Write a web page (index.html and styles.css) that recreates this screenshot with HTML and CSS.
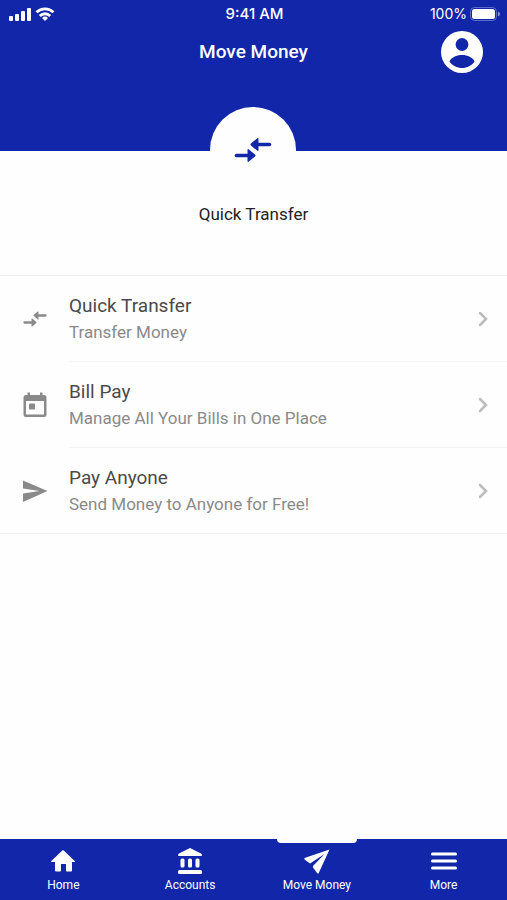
FILE: index.html
```
<!DOCTYPE html>
<html lang="en">
<head>
<meta charset="utf-8">
<meta name="viewport" content="width=device-width, initial-scale=1">
<title>Move Money</title>
<link rel="stylesheet" href="styles.css">
</head>
<body>
<header class="header">
  <div class="status">
    <div class="status-left">
      <svg width="22" height="14" viewBox="0 0 22 14" fill="currentColor" aria-hidden="true"><rect x="0" y="9" width="4" height="5" rx="1"/><rect x="6" y="7" width="4" height="7" rx="1"/><rect x="12" y="4" width="4" height="10" rx="1"/><rect x="18" y="1" width="4" height="13" rx="1"/></svg>
      <svg width="20" height="14" viewBox="0 0 20 14" fill="none" stroke="currentColor" stroke-width="2.8" aria-hidden="true"><path d="M1.500 5.300a12.200 12.200 0 0 1 17 0M4.800 8.900a7.400 7.400 0 0 1 10.400 0"/><path d="M7 11a4.400 4.400 0 0 1 6 0l-3 3z" fill="currentColor" stroke="none"/></svg>
    </div>
    <span class="time">9:41 AM</span>
    <div class="status-right">
      <span>100%</span>
      <svg width="30" height="14" viewBox="0 0 30 14" aria-hidden="true"><rect x=".5" y=".5" width="26" height="13" rx="4" fill="none" stroke="#5f6bc9"/><rect x="2" y="2" width="23" height="10" rx="2.500" fill="currentColor"/><path d="M28 4.500q2 .8 2 2.500t-2 2.500z" fill="#8b94da"/></svg>
    </div>
  </div>
  <div class="titlebar">
    <h1>Move Money</h1>
    <button class="profile" type="button" aria-label="Profile">
      <svg width="42" height="42" viewBox="0 0 42 42" aria-hidden="true"><circle cx="21" cy="21" r="21" fill="#fff"/><circle cx="21" cy="13.500" r="6.400" fill="#1226aa"/><path d="M8.500 30.500C10 26.500 15.500 24 21 24s11 2.500 12.500 6.500C31 34.500 26 37 21 37s-10-2.500-12.500-6.500z" fill="#1226aa"/></svg>
    </button>
  </div>
</header>
<main>
  <section class="hero">
    <button class="hero-button" type="button">
      <span class="hero-circle">
        <svg width="44" height="44" viewBox="0 0 24 24" aria-hidden="true"><use href="#transfer"/></svg>
      </span>
      <span>Quick Transfer</span>
    </button>
  </section>
  <ul class="list">
    <li><a class="row" href="#quick-transfer">
      <svg class="row-icon" viewBox="0 0 24 24" aria-hidden="true"><g id="transfer"><path d="M3 15h7M21 9h-7" fill="none" stroke="currentColor" stroke-width="2" stroke-linecap="round"/><path d="M9 12.200q0-1.200.9-.4l3.200 2.700q.6.500 0 1l-3.200 2.700q-.9.800-.9-.4zM15 6.200q0-1.200-.9-.4l-3.200 2.700q-.6.500 0 1l3.200 2.700q.9.800.9-.4z" fill="currentColor"/></g></svg>
      <span class="row-body"><span class="row-text"><span class="row-title">Quick Transfer</span><span class="row-sub">Transfer Money</span></span>
      <svg class="chevron" viewBox="0 0 10 16" aria-hidden="true"><path d="M2 2l6 6-6 6"/></svg></span>
    </a></li>
    <li><a class="row" href="#bill-pay">
      <svg class="row-icon" viewBox="0 0 28 28" aria-hidden="true"><path fill="currentColor" fill-rule="evenodd" d="M6.500 1.500h2.500v2.500h10V1.500h2.500V4h1.500a2.500 2.500 0 0 1 2.500 2.500v17a2.500 2.500 0 0 1-2.500 2.500H5a2.500 2.500 0 0 1-2.500-2.500v-17A2.500 2.500 0 0 1 5 4h1.500zM5 10v13.500h18V10z"/><rect x="8" y="12.500" width="6" height="6" rx="1" fill="currentColor"/></svg>
      <span class="row-body"><span class="row-text"><span class="row-title">Bill Pay</span><span class="row-sub">Manage All Your Bills in One Place</span></span>
      <svg class="chevron" viewBox="0 0 10 16" aria-hidden="true"><path d="M2 2l6 6-6 6"/></svg></span>
    </a></li>
    <li><a class="row" href="#pay-anyone">
      <svg class="row-icon" viewBox="0 0 28 28" aria-hidden="true"><path fill="currentColor" d="M2 3.500l24.500 10.500L2 25v-8.500L18.500 14 2 11.500z"/></svg>
      <span class="row-body"><span class="row-text"><span class="row-title">Pay Anyone</span><span class="row-sub">Send Money to Anyone for Free!</span></span>
      <svg class="chevron" viewBox="0 0 10 16" aria-hidden="true"><path d="M2 2l6 6-6 6"/></svg></span>
    </a></li>
  </ul>
</main>
<nav class="tabs" aria-label="Main">
  <a href="#home"><svg viewBox="0 0 28 28" aria-hidden="true"><path fill="currentColor" d="M13.300 3.500q.7-.6 1.400 0L25.700 14q.8 1-.4 1H23v8.500a1 1 0 0 1-1 1h-4a1 1 0 0 1-1-1V17h-5v6.500a1 1 0 0 1-1 1H7a1 1 0 0 1-1-1V15H2.700q-1.200 0-.4-1z"/></svg>Home</a>
  <a href="#accounts"><svg viewBox="0 0 28 28" aria-hidden="true"><g fill="currentColor"><path d="M14 1l11 5.500q1 .6 1 1.500t-1 1H3q-1 0-1-1t1-1.500z"/><rect x="4.500" y="11.500" width="4" height="9" rx="1.500"/><rect x="12" y="11.500" width="4" height="9" rx="1.500"/><rect x="19.500" y="11.500" width="4" height="9" rx="1.500"/><rect x="2" y="23" width="24" height="4" rx="1.500"/></g></svg>Accounts</a>
  <a class="active" href="#move-money" aria-current="page"><svg viewBox="0 0 28 28" aria-hidden="true"><path fill="currentColor" d="M26.500 2.500L1.500 11v1.500l5.500 4L21.500 7 10 19v1.500l4.500 6h1z"/></svg>Move Money</a>
  <a href="#more"><svg viewBox="0 0 28 28" aria-hidden="true"><path stroke="currentColor" stroke-width="3" stroke-linecap="round" d="M2.500 7h23M2.500 14h23M2.500 21h23"/></svg>More</a>
</nav>
</body>
</html>
```
FILE: styles.css
```
* { box-sizing: border-box; }

body {
  margin: 0;
  min-height: 100vh;
  display: flex;
  flex-direction: column;
  background: #fefefe;
  color: #222;
  font-family: Roboto, "Liberation Sans", sans-serif;
}

a { color: inherit; text-decoration: none; }
button { border: 0; padding: 0; background: none; font: inherit; color: inherit; }
svg { display: block; }

.header {
  background: #1226aa;
  color: #fff;
  padding-bottom: 75px;
}

.status {
  display: grid;
  grid-template-columns: 1fr auto 1fr;
  align-items: center;
  height: 27px;
  padding: 0 7px 0 9px;
  font: 500 15px/27px Inter, sans-serif;
}
.status-left, .status-right { display: flex; align-items: center; gap: 4px; }
.status-right { justify-content: flex-end; font-size: 14px; font-weight: 400; gap: 3px; }

.titlebar {
  display: grid;
  grid-template-columns: 1fr auto 1fr;
  align-items: center;
  height: 49px;
  padding: 0 24px;
}
.titlebar h1 {
  grid-column: 2;
  margin: 0;
  font-size: 19px;
  font-weight: 500;
  line-height: 24px;
}
.profile { justify-self: end; }

.hero {
  display: flex;
  justify-content: center;
  margin-top: -44px;
  padding-bottom: 49px;
}
.hero-button {
  display: flex;
  flex-direction: column;
  align-items: center;
  gap: 9px;
  font-size: 17px;
  line-height: 24px;
}
.hero-circle {
  display: grid;
  place-items: center;
  width: 86px;
  height: 86px;
  border-radius: 50%;
  background: #fefefe;
  color: #1226aa;
}

.list {
  margin: 0;
  padding: 0;
  list-style: none;
  border-top: 1px solid #efefef;
  border-bottom: 1px solid #efefef;
}
.row {
  display: flex;
  align-items: center;
  gap: 20px;
  padding-left: 21px;
}
.row-icon { width: 28px; height: 28px; color: #8a8a8a; }
.row-body {
  flex: 1;
  display: flex;
  align-items: center;
  justify-content: space-between;
  padding: 17px 19px 16px 0;
  border-bottom: 1px solid #f5f5f5;
}
li:last-child .row-body { border-bottom: 0; }
.row-text { display: flex; flex-direction: column; line-height: 26px; }
.row-title { font-size: 19px; color: #4a4a4a; }
.row-sub { font-size: 17px; color: #8a8a8a; }
.chevron {
  width: 10px;
  height: 16px;
  fill: none;
  stroke: #bcbcbc;
  stroke-width: 2.5;
  stroke-linecap: round;
}

.tabs {
  display: grid;
  grid-template-columns: repeat(4, 1fr);
  margin-top: auto;
  background: #1226aa;
  color: #fff;
}
.tabs a {
  position: relative;
  display: flex;
  flex-direction: column;
  align-items: center;
  gap: 2px;
  padding: 8px 0 7px;
  font-size: 12px;
  line-height: 16px;
}
.tabs svg { width: 28px; height: 28px; }
.tabs .active::before {
  content: "";
  position: absolute;
  top: 0;
  width: 80px;
  height: 4px;
  border-radius: 0 0 4px 4px;
  background: #fefefe;
}
```
